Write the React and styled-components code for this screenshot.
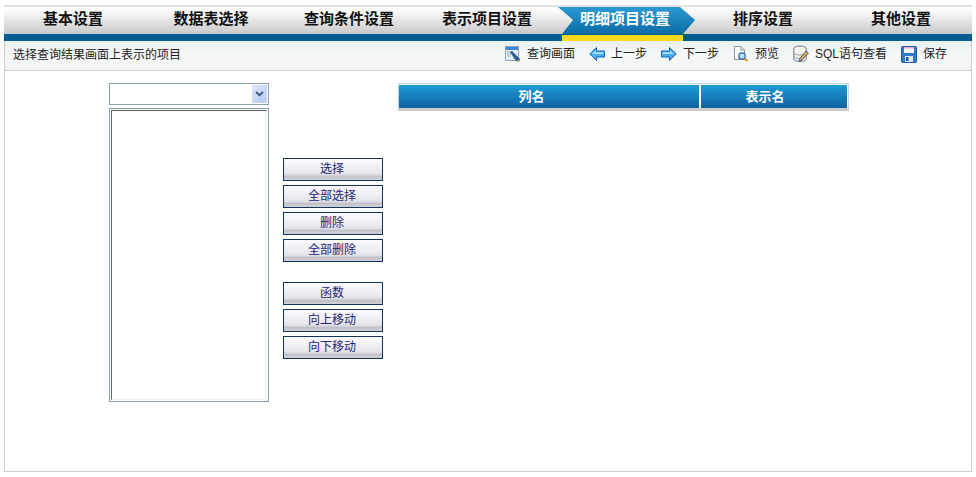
import React from "react";
import styled, { createGlobalStyle } from "styled-components";

const Global = createGlobalStyle`
  html, body { margin: 0; padding: 0; background: #fff; }
  body { font-family: "Liberation Sans", "Noto Sans CJK SC", sans-serif; font-size: 12px; }
`;

const Frame = styled.div`
  box-sizing: border-box;
  width: 968px;
  height: 467px;
  margin: 5px 0 0 4px;
  border: 1px solid #cccccc;
  border-top: 2px solid #e2e2e2;
  display: flex;
  flex-direction: column;
`;

const Tabs = styled.div`
  display: grid;
  grid-template-columns: repeat(7, 138px);
  margin: 0 -1px;
  height: 27px;
  flex: none;
  background: linear-gradient(#ffffff, #f4f4f4 25%, #c9c9c9);
`;

const Tab = styled.div`
  position: relative;
  display: flex;
  align-items: center;
  justify-content: center;
  padding: 0 0 7px;
  font-size: 15px;
  font-weight: 700;
  color: ${(p) => (p.$active ? "#ffffff" : "#111111")};
  z-index: ${(p) => (p.$active ? 1 : 0)};

  ${(p) =>
    p.$active &&
    `
    &::before {
      content: "";
      position: absolute;
      left: 2px; right: -1px; top: 0; bottom: 0;
      z-index: -1;
      background: linear-gradient(#2a9ad3, #0d6aa3);
      clip-path: polygon(0 0, 122px 0, 137px 13px, 125px 27px, 4px 27px, 15px 13px);
    }
    &::after {
      content: "";
      position: absolute;
      left: 6px; top: 28px;
      width: 121px; height: 6px;
      background: #fdd819;
    }
  `}
`;

const BlueBar = styled.div`
  height: 7px;
  flex: none;
  margin: 0 -1px;
  background: #045c90;
`;

const Toolbar = styled.div`
  box-sizing: border-box;
  height: 30px;
  flex: none;
  display: flex;
  align-items: center;
  justify-content: space-between;
  padding: 0 24px 3px 8px;
  color: #222222;
  background: linear-gradient(#e9f1f5, #f7f8f8 50%, #f2f4f5);
  border-bottom: 1px solid #cfd2d4;
`;

const Hint = styled.span`
  padding-bottom: 1px;
`;

const Actions = styled.div`
  display: flex;
  align-items: center;
  gap: 14px;
`;

const Action = styled.div`
  display: flex;
  align-items: center;
  gap: 6px;
  white-space: nowrap;
`;

const ActionLabel = styled.span`
  padding-bottom: 3px;
`;

const Body = styled.div`
  display: flex;
  align-items: flex-start;
  padding: 12px 0 0 104px;
`;

const LeftCol = styled.div`
  display: flex;
  flex-direction: column;
  gap: 3px;
  width: 160px;
`;

const Select = styled.div`
  box-sizing: border-box;
  height: 22px;
  border: 1px solid #86a0ac;
  padding: 1px;
  display: flex;
  justify-content: flex-end;
  background: #fff;
`;

const SelectArrow = styled.div`
  width: 15px;
  display: flex;
  align-items: center;
  justify-content: center;
  background: linear-gradient(135deg, #dbe6fb, #b7c9f0);
`;

const ListBox = styled.div`
  box-sizing: border-box;
  height: 294px;
  border: 1px solid #86a0ac;
  padding: 1px;
  display: flex;
  background: #fff;
`;

const ListInner = styled.div`
  flex: 1;
  border: 1px solid #eeeeea;
  border-top-color: #666666;
  border-left-color: #666666;
`;

const ButtonCol = styled.div`
  display: flex;
  flex-direction: column;
  gap: 20px;
  width: 100px;
  margin: 75px 0 0 14px;
`;

const ButtonGroup = styled.div`
  display: flex;
  flex-direction: column;
  gap: 4px;
`;

const Btn = styled.button`
  box-sizing: border-box;
  height: 23px;
  width: 100px;
  padding: 0 2px 6px 0;
  border: 1px solid #12345a;
  font: inherit;
  color: #24247a;
  background: linear-gradient(#fbfbff, #e8e8ee 62%, #dcdce4 76%, #c0c0c8 82%, #d2d2d8);
`;

const GridWrap = styled.div`
  box-sizing: border-box;
  width: 451px;
  height: 28px;
  margin-left: 15px;
  padding: 1px 1px 0 0;
  border: 1px solid #c3d6e2;
  border-bottom: 3px solid #cccccc;
`;

const GridHead = styled.div`
  display: grid;
  grid-template-columns: 300px 146px;
  gap: 2px;
  height: 23px;
  width: 448px;
`;

const HeadCell = styled.div`
  display: flex;
  align-items: center;
  justify-content: center;
  padding: 0 ${(p) => p.$pr}px 3px 0;
  color: #fff;
  font-size: 13px;
  font-weight: 700;
  background: linear-gradient(#1f9bd6, #0f62a0);
`;

const IconWindow = () => (
  <svg width="16" height="18" viewBox="0 0 16 18">
    <rect x="0.5" y="1.5" width="13" height="14" fill="#e6edf5" stroke="#8fa6bd" />
    <rect x="1" y="2" width="12" height="3" fill="#3f86d2" />
    <path d="M2 7h6M2 9h4M2 11h4" stroke="#9fb2c5" />
    <path d="M5 7l2-1 8 8-1 3-3-1z" fill="#2b5c96" />
    <path d="M11.5 16.5l2.5.5-.5-2.5z" fill="#e9c07a" />
  </svg>
);

const IconLeft = () => (
  <svg width="16" height="16" viewBox="0 0 16 16">
    <path d="M.8 8L7.5 1.5V5H15.5V11H7.5V14.5Z" fill="#49aef0" stroke="#1660b8" strokeLinejoin="round" />
    <path d="M3 8L6.5 4.5V6.2H14.5V8Z" fill="#a9dcfb" />
  </svg>
);

const IconRight = () => (
  <svg width="16" height="16" viewBox="0 0 16 16">
    <path d="M15.2 8L8.5 1.5V5H.5V11H8.5V14.5Z" fill="#49aef0" stroke="#1660b8" strokeLinejoin="round" />
    <path d="M1.5 6.2H9.5V4.5L13 8H1.5Z" fill="#a9dcfb" />
  </svg>
);

const IconPreview = () => (
  <svg width="16" height="16" viewBox="0 0 16 16">
    <path d="M1.5.5H8L11.5 4V13.5H1.5Z" fill="#fff" stroke="#8a9099" />
    <path d="M8 .5V4H11.5" fill="#e4e8ee" stroke="#8a9099" />
    <circle cx="9" cy="10" r="3.2" fill="#bfe3f7" stroke="#2c6fae" strokeWidth="1.3" />
    <path d="M11.5 12.5L14.5 15" stroke="#d98b1e" strokeWidth="2" />
  </svg>
);

const IconSql = () => (
  <svg width="16" height="18" viewBox="0 0 16 18">
    <ellipse cx="7" cy="3.5" rx="6.2" ry="2.5" fill="#f1f1f1" stroke="#777" />
    <path d="M.8 3.5V14c0 1.4 2.8 2.5 6.2 2.5s6.2-1.1 6.2-2.5V3.5" fill="#f1f1f1" stroke="#777" />
    <path d="M.8 7.5c0 1.4 2.8 2.5 6.2 2.5s6.2-1.1 6.2-2.5M.8 11c0 1.4 2.8 2.5 6.2 2.5" fill="none" stroke="#999" />
    <path d="M13 6l2.4 2L9 15l-3 1.5L7 13.4Z" fill="#f0a63a" stroke="#2f62a0" strokeWidth="1" />
  </svg>
);

const IconSave = () => (
  <svg width="16" height="17" viewBox="0 0 16 17">
    <rect x=".5" y=".5" width="15" height="16" rx="1" fill="#2f79cf" stroke="#1d58a4" />
    <rect x="3" y="1" width="10" height="6" fill="#f6f6fb" />
    <rect x="3" y="1" width="10" height="1.5" fill="#f2a6c8" />
    <rect x="4" y="10" width="8" height="6" fill="#dfe8f4" />
    <rect x="5" y="11" width="2.5" height="4" fill="#1d58a4" />
  </svg>
);

const Chevron = () => (
  <svg width="9" height="6" viewBox="0 0 9 6">
    <path d="M1 1l3.5 3.2L8 1" fill="none" stroke="#3d5786" strokeWidth="2" />
  </svg>
);

const tabs = ["基本设置", "数据表选择", "查询条件设置", "表示项目设置", "明细项目设置", "排序设置", "其他设置"];
const actions = [
  [IconWindow, "查询画面"],
  [IconLeft, "上一步"],
  [IconRight, "下一步"],
  [IconPreview, "预览"],
  [IconSql, "SQL语句查看"],
  [IconSave, "保存"],
];

export default function App() {
  return (
    <>
      <Global />
      <Frame>
        <Tabs>
          {tabs.map((t, i) => (
            <Tab key={t} $active={i === 4}>{t}</Tab>
          ))}
        </Tabs>
        <BlueBar />
        <Toolbar>
          <Hint>选择查询结果画面上表示的项目</Hint>
          <Actions>
            {actions.map(([Icon, label]) => (
              <Action key={label}>
                <Icon />
                <ActionLabel>{label}</ActionLabel>
              </Action>
            ))}
          </Actions>
        </Toolbar>
        <Body>
          <LeftCol>
            <Select>
              <SelectArrow><Chevron /></SelectArrow>
            </Select>
            <ListBox><ListInner /></ListBox>
          </LeftCol>
          <ButtonCol>
            <ButtonGroup>
              <Btn>选择</Btn>
              <Btn>全部选择</Btn>
              <Btn>删除</Btn>
              <Btn>全部删除</Btn>
            </ButtonGroup>
            <ButtonGroup>
              <Btn>函数</Btn>
              <Btn>向上移动</Btn>
              <Btn>向下移动</Btn>
            </ButtonGroup>
          </ButtonCol>
          <GridWrap>
            <GridHead>
              <HeadCell $pr={35}>列名</HeadCell>
              <HeadCell $pr={18}>表示名</HeadCell>
            </GridHead>
          </GridWrap>
        </Body>
      </Frame>
    </>
  );
}
